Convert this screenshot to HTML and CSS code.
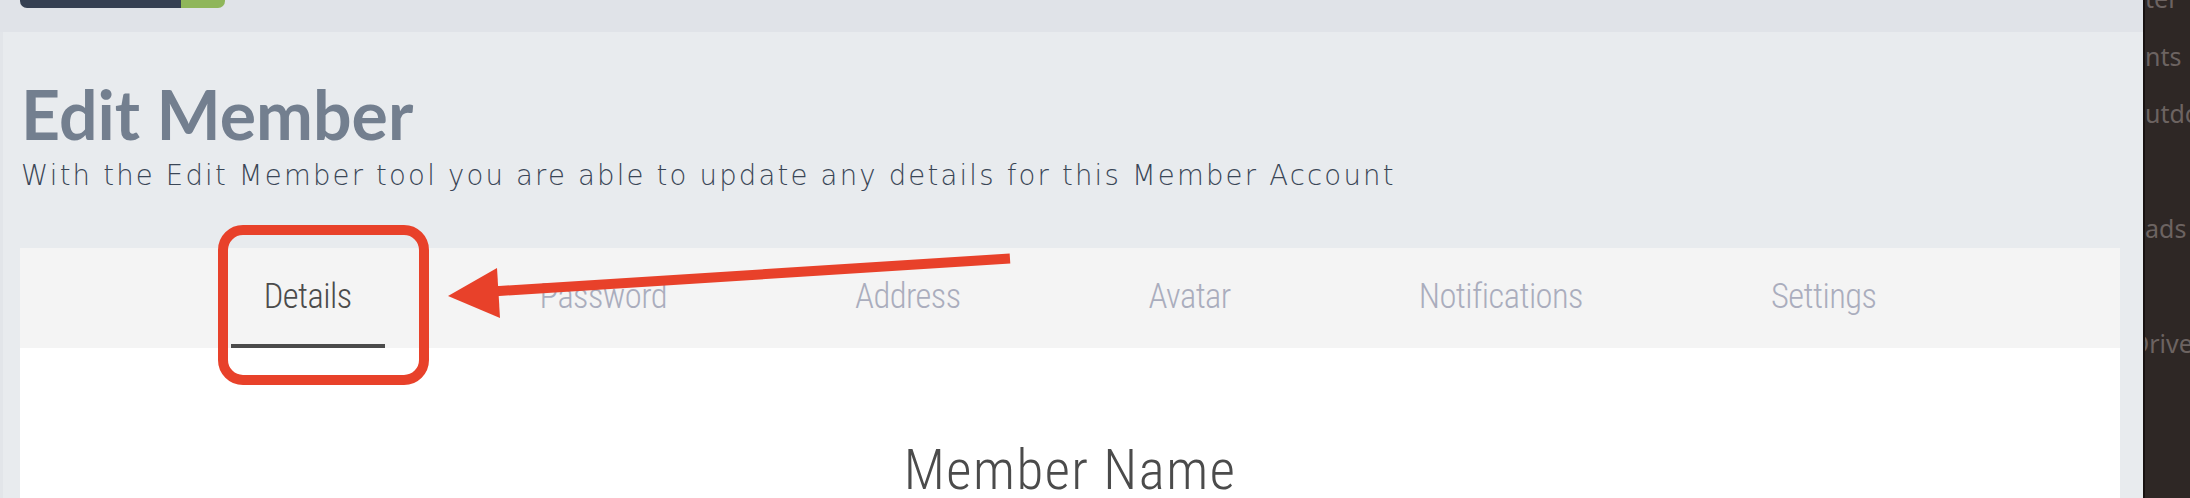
FILE: index.html
```html
<!DOCTYPE html>
<html lang="en">
<head>
<meta charset="utf-8">
<title>Edit Member</title>
<link rel="stylesheet" href="styles.css">
</head>
<body>
<div class="screen">
  <main class="main">
    <div class="topband">
      <div class="topbtn"><span class="topbtn-dark"></span><span class="topbtn-green"></span></div>
    </div>
    <div class="content">
      <h1 class="title">Edit Member</h1>
      <p class="subtitle">With the Edit Member tool you are able to update any details for this Member Account</p>
      <section class="card">
        <nav class="tabs">
          <a class="tab active">Details</a>
          <a class="tab">Password</a>
          <a class="tab">Address</a>
          <a class="tab">Avatar</a>
          <a class="tab">Notifications</a>
          <a class="tab">Settings</a>
        </nav>
        <div class="panel">
          <h2 class="panel-title">Member Name</h2>
        </div>
      </section>
    </div>
  </main>
  <aside class="sidebar">
    <div class="side-item">ter</div>
    <div class="side-item">nts</div>
    <div class="side-item">utdo</div>
    <div class="side-item"></div>
    <div class="side-item">ads</div>
    <div class="side-item"></div>
    <div class="side-item side-cut">Drive</div>
  </aside>
  <svg class="annotation" width="2190" height="498" viewBox="0 0 2190 498" xmlns="http://www.w3.org/2000/svg">
    <rect x="223" y="230" width="201" height="150" rx="20" ry="20" fill="none" stroke="#e8412a" stroke-width="10"/>
    <line x1="1010" y1="258.5" x2="492" y2="291.5" stroke="#e8412a" stroke-width="10"/>
    <polygon points="448,296 497,268 500,318" fill="#e8412a"/>
  </svg>
</div>
</body>
</html>
```
FILE: styles.css
```css
html, body {
  margin: 0;
  padding: 0;
}
body {
  width: 2190px;
  height: 498px;
  overflow: hidden;
  background: #e8ebee;
}
.screen {
  position: relative;
  display: flex;
  width: 2190px;
  height: 498px;
  overflow: hidden;
}
.main {
  flex: 1;
  min-width: 0;
  background: #e8ebee;
  box-shadow: inset 3px 0 0 #e2e5e9;
}
.topband {
  height: 32px;
  background: #e0e3e8;
  padding-left: 20px;
  box-sizing: border-box;
}
.topbtn {
  display: flex;
  width: 205px;
  height: 8px;
  border-radius: 0 0 7px 7px;
  overflow: hidden;
}
.topbtn-dark {
  width: 161px;
  background: #354052;
}
.topbtn-green {
  flex: 1;
  background: #8fb65a;
}
.content {
  padding: 0 23px 0 20px;
}
.title {
  margin: 48px 0 0 1px;
  font-family: "Lato", "Noto Sans", sans-serif;
  font-weight: 700;
  font-size: 68px;
  line-height: 1;
  color: #737f8f;
}
.subtitle {
  margin: 14px 0 0 1px;
  font-family: "DejaVu Sans", "Lato", sans-serif;
  font-weight: 200;
  font-size: 27.5px;
  line-height: 1;
  letter-spacing: 2.2px;
  color: #3a4656;
}
.card {
  margin-top: 58px;
  background: #ffffff;
}
.tabs {
  display: flex;
  justify-content: center;
  gap: 122px;
  height: 100px;
  background: #f4f4f4;
}
.tab {
  box-sizing: border-box;
  height: 100px;
  padding: 31px 33px 0;
  font-family: "Roboto Condensed", "Liberation Sans Narrow", "Roboto", sans-serif;
  font-weight: 300;
  font-size: 34.5px;
  line-height: 1;
  letter-spacing: -0.55px;
  color: #aaadbd;
  border-bottom: 4px solid transparent;
}
.tab.active {
  color: #4b4b4b;
  border-bottom-color: #4b4b4b;
}
.panel {
  height: 200px;
  padding-top: 95px;
  box-sizing: border-box;
}
.panel-title {
  margin: 0;
  text-align: center;
  font-family: "Roboto Condensed", "Liberation Sans Narrow", "Roboto", sans-serif;
  font-weight: 300;
  font-size: 55px;
  line-height: 1;
  letter-spacing: 1.5px;
  color: #4b4b4b;
}
.sidebar {
  width: 45px;
  flex: none;
  background: #2e2725;
  border-left: 2px solid #171110;
  overflow: hidden;
}
.side-item {
  height: 57.5px;
  line-height: 57.5px;
  font-family: "Noto Sans", "Liberation Sans", sans-serif;
  font-size: 25px;
  color: #6c6361;
  white-space: nowrap;
}
.side-item:first-child {
  margin-top: -30px;
}
.side-cut {
  margin-left: -14px;
}
.annotation {
  position: absolute;
  top: 0;
  left: 0;
  pointer-events: none;
}
```
